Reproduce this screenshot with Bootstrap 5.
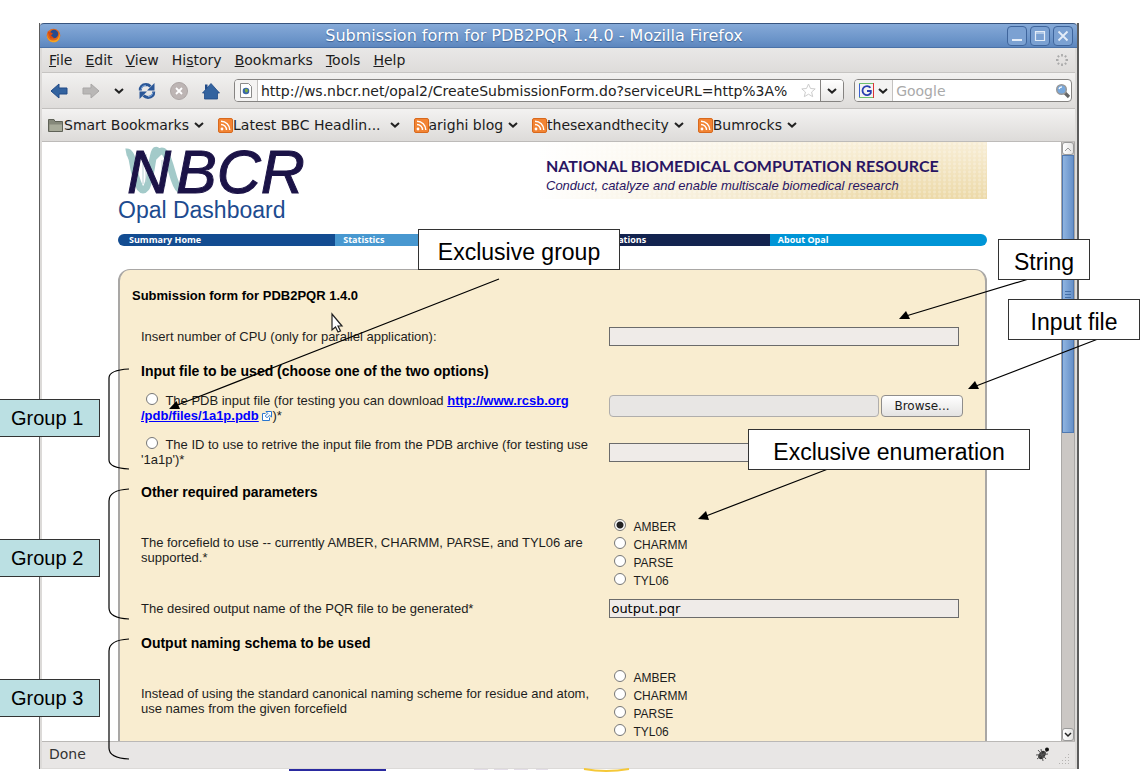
<!DOCTYPE html>
<html lang="en">
<head>
<meta charset="utf-8">
<meta name="viewport" content="width=device-width, initial-scale=1">
<title>Submission form for PDB2PQR 1.4.0</title>
<link href="https://cdn.jsdelivr.net/npm/bootstrap@5.3.0/dist/css/bootstrap.min.css" rel="stylesheet">
<style>
  body { background: #fff; color: #000; font-family: "DejaVu Sans", sans-serif; font-size: 14px; line-height: 20px; }
  svg { display: block; flex: none; }
  .slide { height: 100vh; padding: 23px 69px 4px 39px; overflow: hidden; }
  .win { border: solid #5c5c5c; border-width: 0 2px 0 1px; background: #e6e5e4; }
  .win-body { border: solid #dcdad8; border-width: 0 2px 1px 2px; min-height: 0; }
  .title-bar, .menu-bar, .tool-bar, .mark-bar, .status { flex: none; }

  .title-bar { height: 25px; background: linear-gradient(#86aad8, #6a93c8 70%, #5d86be); border-top: 1px solid #38557f; border-bottom: 1px solid #4a72a8; border-radius: 4px 4px 0 0; color: #fff; font-size: 16px; text-shadow: 0 1px 1px #3c5f92; padding: 0 4px 0 6px; }
  .title-btns { gap: 3px; }
  .title-btn { width: 20px; height: 20px; padding: 0; border: 1px solid #3f659c; border-radius: 4px; background: #7ba1d2; }

  .menu-bar { height: 25px; background: linear-gradient(#e9e8e7, #dedcda); border-bottom: 1px solid #c6c4c2; padding: 0 6px 0 7px; gap: 13px; }
  .menu-bar a, .mark-bar a { color: #1c1c1c; text-decoration: none; white-space: nowrap; }
  .tool-bar { height: 36px; background: linear-gradient(#f2f1f0, #dedcda); border-bottom: 1px solid #c2c0be; padding: 0 3px 0 8px; gap: 14px; }
  .mark-bar { height: 33px; background: linear-gradient(#f3f2f1, #dddbd9); border-bottom: 1px solid #bdbbb9; padding: 0 6px; gap: 13px; }
  .icon-btn { border: 0; padding: 0; background: none; }
  .wells { gap: 10px; min-width: 0; }
  .well-box { height: 23px; border: 1px solid #858381; border-radius: 4px; background: #fff; overflow: hidden; }
  .search-well { width: 26%; }
  .well-box input { border: 0; background: none; outline: 0; padding: 0 0 0 3px; min-width: 0; height: 21px; color: #222; }
  .well-box input::placeholder { color: #a9a9a9; opacity: 1; }
  .site-btn { border: 0; border-right: 1px solid #c4c2c0; background: #f4f3f2; padding: 0 4px; height: 21px; }
  .drop-btn { border: 0; border-left: 1px solid #858381; background: linear-gradient(#fff, #e8e7e6); padding: 0 6px; height: 21px; }

  .view { background: #fff; overflow: hidden; min-height: 0; }
  .doc { min-width: 0; min-height: 0; overflow: hidden; padding: 0 74px 0 76px; font-family: "Liberation Sans", Arial, sans-serif; font-size: 13px; line-height: 15px; color: #1d1d1d; }
  .masthead { height: 92px; }
  .brand-name { color: #1d4b8f; font-size: 23px; line-height: 28px; margin-top: 2px; }
  .ribbon { width: 500px; height: 57px; padding: 15px 0 0 59px; color: #291563;
    background: linear-gradient(90deg, #fff 10%, rgba(255,255,255,.6) 40%, rgba(255,255,255,0) 80%), radial-gradient(circle, rgba(255,255,255,.25) 1px, transparent 2px) 0 0 / 5px 4px, linear-gradient(#f8eed6, #ecd9a8); }
  .ribbon strong { font: 700 16px/18px Lato, sans-serif; }
  .ribbon em { font-size: 13px; line-height: 21px; }
  .site-nav { height: 12px; border-radius: 6px; overflow: hidden; font: 700 9px/12px "Open Sans", sans-serif; display: grid; grid-template-columns: repeat(4, 1fr); }
  .site-nav a { color: #fff; text-decoration: none; padding-left: 8px; height: 12px; }
  .site-nav a:nth-child(1) { padding-left: 11px; background: #134c91; }
  .site-nav a:nth-child(2) { background: #4898d0; }
  .site-nav a:nth-child(3) { background: #13234f; }
  .site-nav a:nth-child(4) { background: #0095d6; }

  .panel { margin-top: 23px; background: #f9edd0; border: 1px solid #a9a7a5; border-right-width: 2px; border-left-width: 2px; border-radius: 12px 12px 0 0; padding: 18px 26px 30px 21px; }
  .panel h1 { font-size: 13px; line-height: 15px; font-weight: 700; color: #000; margin: 0 0 24px -9px; }
  .panel h2 { font-size: 14px; line-height: 16px; font-weight: 700; color: #000; margin: 17px 0 0; }
  .form-line { display: grid; grid-template-columns: 469fr 350fr; align-items: center; margin-top: 14px; }
  .panel h1 + .form-line { margin-top: 0; }
  .choice-line { margin-top: 16px; }
  .choice-line + .form-line { margin-top: 11px; }
  .form-line > :first-child { padding-right: 12px; }
  .choice-line > :first-child { padding-bottom: 5px; }
  .form-line a { color: #00f; font-weight: 700; }
  .text-well { width: 100%; height: 19px; border: 1px solid #6b6b6b; background: #efebe8; border-radius: 0; padding: 0 1px; font-family: "DejaVu Sans", sans-serif; font-size: 13px; line-height: 17px; color: #000; }
  .file-pair { gap: 2px; margin-right: -4px; padding-top: 2px; }
  .file-well { height: 22px; border: 1px solid #b0aeac; border-radius: 4px; background: #e8e6e4; min-width: 0; }
  .browse-btn { width: 82px; height: 22px; border: 1px solid #8f8d8b; border-radius: 4px; background: linear-gradient(#fff, #e4e3e2); font-family: "DejaVu Sans", sans-serif; font-size: 12px; line-height: 18px; padding: 0; color: #1c1c1c; }
  input[type=radio] { appearance: none; width: 12px; height: 12px; border: 1px solid #777; border-radius: 50%; background: #fff; margin: 0; flex: none; }
  input[type=radio]:checked { background: radial-gradient(circle, #222 3px, #fff 4px); }
  input.inline-radio { margin: 0 4px 0 5px; }
  .choice { height: 18px; padding-left: 5px; gap: 7px; font-size: 12px; line-height: 18px; }
  .choice label { padding-top: 3px; }
  .ext-icon { display: inline-block; vertical-align: -1px; }

  .scroll-strip { width: 14px; background: #cbc7c4; border: solid #aaa8a6; border-width: 0 1px; }
  .scroll-strip button { width: 12px; height: 13px; padding: 0; border: 1px solid #999; background: linear-gradient(90deg, #fff, #e4e3e2); border-radius: 3px; display: grid; place-items: center; }
  .scroll-thumb { height: 278px; background: linear-gradient(90deg, #8fb4e0, #6690c8); border: 1px solid #4f79b2; }
  .status { height: 27px; background: #e8e6e5; border-top: 1px solid #bab8b6; padding: 0 4px 2px 7px; color: #333; }

  .note { position: absolute; z-index: 3; background: #fff; border: 1px solid #333; font: 23px/28px "Liberation Sans", Arial, sans-serif; display: grid; place-items: center; height: 41px; padding-top: 4px; white-space: nowrap; }
  .group-tag { position: absolute; z-index: 3; left: 0; width: 100px; height: 38px; background: #bbe0e3; border: 1px solid #333; border-left: 0; font: 20px/36px "Liberation Sans", Arial, sans-serif; padding: 0 0 0 11px; }
  .note-group { left: 418px; top: 229px; width: 202px; }
  .note-string { left: 998px; top: 239px; width: 92px; }
  .note-file { left: 1008px; top: 299px; width: 132px; }
  .note-enum { left: 748px; top: 429px; width: 282px; }
  .tag-1 { top: 399px; } .tag-2 { top: 539px; } .tag-3 { top: 679px; }
  .arrows { position: absolute; left: 0; top: 0; z-index: 2; pointer-events: none; }
</style>
</head>
<body>
<svg width="0" height="0" class="position-absolute" aria-hidden="true">
  <symbol id="feed" viewBox="0 0 15 15"><rect x=".5" y=".5" width="14" height="14" rx="1.500" fill="#f28434" stroke="#d8691d"/><circle cx="4" cy="11" r="1.400" fill="#fff"/><path d="M3 6.500A5.500 5.500 0 0 1 8.500 12M3 3.200A8.800 8.800 0 0 1 11.800 12" fill="none" stroke="#fff" stroke-width="1.400"/></symbol>
  <symbol id="down" viewBox="0 0 10 8"><path d="M1 2L5 5.600L9 2" fill="none" stroke="#222" stroke-width="2"/></symbol>
</svg>

<main class="slide position-relative">
  <div class="win d-flex flex-column h-100">
    <header class="title-bar d-flex align-items-center">
      <svg width="15" height="15" viewBox="0 0 15 15"><circle cx="7.500" cy="7.500" r="6.800" fill="#e0661b"/><circle cx="8" cy="6" r="4.200" fill="#274a8c"/><path d="M1 5C1 10 4 13 8 12.500C12 12 13.500 9 13 5C14.500 8 14 12 10 14C5 15.500 0 12 1 5Z" fill="#f5a623"/><path d="M1.500 3.500L4 4L7 5.500L5 7.500L8 10L4.500 10.500Z" fill="#d9480f"/></svg>
      <span class="flex-fill text-center">Submission form for PDB2PQR 1.4.0 - Mozilla Firefox</span>
      <div class="title-btns d-flex">
        <button class="title-btn" aria-label="Minimize"><svg width="18" height="18"><path d="M4 13h10" stroke="#e4edf8" stroke-width="2"/></svg></button>
        <button class="title-btn" aria-label="Maximize"><svg width="18" height="18"><path d="M4.500 4.500h9v9h-9zM4 6h10" stroke="#e4edf8" stroke-width="1.200" fill="none"/></svg></button>
        <button class="title-btn" aria-label="Close"><svg width="18" height="18"><path d="M4.500 4.500l9 9m0-9l-9 9" stroke="#e4edf8" stroke-width="1.800"/></svg></button>
      </div>
    </header>

    <div class="win-body d-flex flex-column flex-fill">
      <nav class="menu-bar d-flex align-items-center">
        <a href="#"><u>F</u>ile</a><a href="#"><u>E</u>dit</a><a href="#"><u>V</u>iew</a><a href="#">Hi<u>s</u>tory</a><a href="#"><u>B</u>ookmarks</a><a href="#"><u>T</u>ools</a><a href="#"><u>H</u>elp</a>
        <svg class="ms-auto" width="14" height="14" viewBox="-7 -7 14 14" stroke="#aaa" stroke-width="1.800"><path d="M0-6v2.500M0 3.500v2.500M-6 0h2.500M3.500 0h2.500M-4.300-4.300l1.500 1.500M2.800 2.800l1.500 1.500M-4.300 4.300l1.500-1.500M2.800-2.800l1.500-1.500"/></svg>
      </nav>

      <div class="tool-bar d-flex align-items-center">
        <button class="icon-btn" aria-label="Back"><svg width="18" height="16" viewBox="0 0 18 16"><path d="M1 8L9 1V5H17V11H9V15Z" fill="#33639f" stroke="#204a87"/></svg></button>
        <button class="icon-btn" aria-label="Forward"><svg width="18" height="16" viewBox="0 0 18 16"><path d="M17 8L9 1V5H1V11H9V15Z" fill="#b9b7b6" stroke="#a9a7a6"/></svg></button>
        <button class="icon-btn" aria-label="Recent pages"><svg width="10" height="8"><use href="#down"/></svg></button>
        <button class="icon-btn" aria-label="Reload"><svg width="18" height="18" viewBox="0 0 18 18"><path d="M2.300 8.500Q2 2.800 8 2.600Q10.500 2.600 12.500 4.500" fill="none" stroke="#2b5797" stroke-width="3"/><path d="M9 8.500H16.500V1Z" fill="#2b5797"/><path d="M15.700 9.500Q16 15.200 10 15.400Q7.500 15.400 5.500 13.500" fill="none" stroke="#2b5797" stroke-width="3"/><path d="M9 9.500H1.500V17Z" fill="#2b5797"/><path d="M3 7.500Q3.500 3.500 8 3.200M15 10.500Q14.500 14.500 10 14.800" fill="none" stroke="#7fa8dc"/></svg></button>
        <button class="icon-btn" aria-label="Stop"><svg width="18" height="18" viewBox="0 0 18 18"><circle cx="9" cy="9" r="8.500" fill="#bdb5b4" stroke="#aca5a4"/><path d="M6 6l6 6m0-6l-6 6" stroke="#fff" stroke-width="1.800"/></svg></button>
        <button class="icon-btn" aria-label="Home"><svg width="18" height="18" viewBox="0 0 18 18"><path d="M9 1.500L17.500 11H15.500V17H2.500V11H.5Z" fill="#33639f" stroke="#204a87" stroke-width=".8"/><path d="M3 2.500h2.500V6L3 8Z" fill="#204a87"/></svg></button>
        <div class="wells d-flex flex-fill">
          <div class="well-box d-flex align-items-center flex-fill">
            <button class="site-btn" aria-label="Site identity"><svg width="14" height="15" viewBox="0 0 14 15"><path d="M1.500.5H9.500L12.500 3.500V14.500H1.500Z" fill="#fff" stroke="#8a8a8a"/><circle cx="7" cy="8" r="3.300" fill="#3a67a8"/><path d="M6 6Q9 5 9 8Q7 11 6 8Z" fill="#7fb03a"/></svg></button>
            <input class="flex-fill" aria-label="Address" value="http://ws.nbcr.net/opal2/CreateSubmissionForm.do?serviceURL=http%3A%">
            <svg class="me-1" width="15" height="15" viewBox="0 0 15 15"><path d="M7.500 1l2 4.500 4.700.4-3.600 3.100 1.100 4.700-4.200-2.500-4.200 2.500 1.100-4.700L.8 5.900l4.700-.4Z" fill="#fff" stroke="#ccc"/></svg>
            <button class="drop-btn" aria-label="History"><svg width="10" height="8"><use href="#down"/></svg></button>
          </div>
          <div class="well-box search-well d-flex align-items-center">
            <button class="site-btn d-flex align-items-center gap-1" aria-label="Search engine"><svg width="15" height="15" viewBox="0 0 15 15"><path d="M.5 14V1" stroke="#3b62d0"/><path d="M0 .5H14M0 14.500H14" stroke="#6cc06c"/><path d="M14.500 0V15" stroke="#d33"/><path d="M11.500 4.800A4.500 4.500 0 1 0 11.800 10V8H8" fill="none" stroke="#2a3fb0" stroke-width="1.800"/></svg><svg width="10" height="8"><use href="#down"/></svg></button>
            <input class="flex-fill" aria-label="Search" placeholder="Google">
            <svg width="16" height="16" viewBox="0 0 16 16"><path d="M9.500 9.500L14 14" stroke="#666" stroke-width="3.200"/><circle cx="6.500" cy="6.500" r="4.800" fill="#78a8dc" stroke="#999" stroke-width="1.500"/><path d="M4 6Q4.500 4 7 3.800" stroke="#fff" fill="none" stroke-width="1.200"/></svg>
          </div>
        </div>
      </div>

      <nav class="mark-bar d-flex align-items-center">
        <a href="#" class="d-flex align-items-center"><svg width="16" height="14" viewBox="0 0 16 14"><path d="M.5 13.500V1.500H6L7 3.500H14.500V13.500Z" fill="#85887a" stroke="#5f6257"/><path d="M1.500 6.500H14V13H1.500Z" fill="#a8ab9a"/></svg>Smart Bookmarks<svg class="ms-1" width="12" height="8"><use href="#down"/></svg></a>
        <a href="#" class="d-flex align-items-center"><svg width="15" height="15"><use href="#feed"/></svg>Latest BBC Headlin...<svg class="ms-2" width="12" height="8"><use href="#down"/></svg></a>
        <a href="#" class="d-flex align-items-center"><svg width="15" height="15"><use href="#feed"/></svg>arighi blog<svg class="ms-1" width="12" height="8"><use href="#down"/></svg></a>
        <a href="#" class="d-flex align-items-center"><svg width="15" height="15"><use href="#feed"/></svg>thesexandthecity<svg class="ms-1" width="12" height="8"><use href="#down"/></svg></a>
        <a href="#" class="d-flex align-items-center"><svg width="15" height="15"><use href="#feed"/></svg>Bumrocks<svg class="ms-1" width="12" height="8"><use href="#down"/></svg></a>
      </nav>

      <div class="view d-flex flex-fill">
        <div class="doc flex-fill">
          <div class="masthead d-flex justify-content-between align-items-start">
            <div>
              <svg width="200" height="52" viewBox="0 0 200 52" role="img" aria-label="NBCR">
                <path d="M8 10Q13 9 15 22T22 46Q25 50 28 46T34 22T40 11Q44 7 47 11T54 30T62 48" fill="none" stroke="#a3cac9" stroke-width="7"/>
                <path d="M25 14V42M28 12V40M44 18V46M47 18V44" stroke="#b9cfd2"/>
                <text y="51" font-family="Liberation Sans, Arial, sans-serif" font-size="61" font-style="italic" fill="#1b1347" stroke="#1b1347"><tspan x="9">N</tspan><tspan x="58">BCR</tspan></text>
              </svg>
              <div class="brand-name">Opal Dashboard</div>
            </div>
            <div class="ribbon d-flex flex-column"><strong>NATIONAL BIOMEDICAL COMPUTATION RESOURCE</strong><em>Conduct, catalyze and enable multiscale biomedical research</em></div>
          </div>
          <nav class="site-nav">
            <a href="#">Summary Home</a><a href="#">Statistics</a><a href="#">List of Applications</a><a href="#">About Opal</a>
          </nav>

          <form class="panel" onsubmit="return false">
            <h1>Submission form for PDB2PQR 1.4.0</h1>
            <div class="form-line"><label for="cpu">Insert number of CPU (only for parallel application):</label><input id="cpu" class="text-well" type="text"></div>
            <h2>Input file to be used (choose one of the two options)</h2>
            <div class="form-line">
              <label for="src1"><input class="inline-radio" type="radio" name="src" id="src1"> The PDB input file (for testing you can download <a href="#">http://www.rcsb.org<br>/pdb/files/1a1p.pdb</a> <svg class="ext-icon" width="10" height="10" viewBox="0 0 10 10"><path d="M3.500 2.500H.5V9.500H7.500V6.500" fill="#fff" stroke="#2a76cf"/><path d="M4 .5H9.500V6L7.500 4.200L5 6.800L3.300 5L5.800 2.500Z" fill="#fff" stroke="#2a76cf"/></svg>)*</label>
              <div class="file-pair d-flex align-self-start"><input class="file-well flex-fill" type="text" aria-label="Input file"><button class="browse-btn" type="button">Browse...</button></div>
            </div>
            <div class="form-line">
              <label for="src2"><input class="inline-radio" type="radio" name="src" id="src2"> The ID to use to retrive the input file from the PDB archive (for testing use '1a1p')*</label>
              <input class="text-well" type="text" aria-label="PDB ID">
            </div>
            <h2>Other required parameters</h2>
            <div class="form-line choice-line">
              <span>The forcefield to use -- currently AMBER, CHARMM, PARSE, and TYL06 are supported.*</span>
              <div>
                <div class="choice d-flex align-items-center"><input type="radio" name="ff" id="f1" checked><label for="f1">AMBER</label></div>
                <div class="choice d-flex align-items-center"><input type="radio" name="ff" id="f2"><label for="f2">CHARMM</label></div>
                <div class="choice d-flex align-items-center"><input type="radio" name="ff" id="f3"><label for="f3">PARSE</label></div>
                <div class="choice d-flex align-items-center"><input type="radio" name="ff" id="f4"><label for="f4">TYL06</label></div>
              </div>
            </div>
            <div class="form-line"><label for="out">The desired output name of the PQR file to be generated*</label><input id="out" class="text-well" type="text" value="output.pqr"></div>
            <h2>Output naming schema to be used</h2>
            <div class="form-line choice-line">
              <span>Instead of using the standard canonical naming scheme for residue and atom, use names from the given forcefield</span>
              <div>
                <div class="choice d-flex align-items-center"><input type="radio" name="ns" id="n1"><label for="n1">AMBER</label></div>
                <div class="choice d-flex align-items-center"><input type="radio" name="ns" id="n2"><label for="n2">CHARMM</label></div>
                <div class="choice d-flex align-items-center"><input type="radio" name="ns" id="n3"><label for="n3">PARSE</label></div>
                <div class="choice d-flex align-items-center"><input type="radio" name="ns" id="n4"><label for="n4">TYL06</label></div>
              </div>
            </div>
          </form>
        </div>
        <div class="scroll-strip d-flex flex-column">
          <button aria-label="Scroll up"><svg width="8" height="6"><path d="M1 5L4 2L7 5" fill="none" stroke="#999"/></svg></button>
          <div class="scroll-thumb d-grid align-items-center justify-content-center"><svg width="6" height="8"><path d="M0 1.500H6M0 4.500H6M0 7.500H6" stroke="#456fa6"/></svg></div>
          <button class="mt-auto" aria-label="Scroll down"><svg width="8" height="6"><path d="M1 1L4 4L7 1" fill="none" stroke="#222" stroke-width="1.500"/></svg></button>
        </div>
      </div>

      <footer class="status d-flex align-items-center">
        <span>Done</span>
        <svg class="ms-auto me-2" width="16" height="16" viewBox="0 0 16 16"><ellipse cx="7" cy="9" rx="3" ry="4.500" transform="rotate(40 7 9)" fill="#333"/><circle cx="12" cy="3.500" r="2" fill="#111"/><path d="M1 9L13 8M3 4L11 13M6 3L8 15M2 13L12 5" stroke="#555"/></svg>
        <svg width="12" height="12" fill="#b5b3b1" class="align-self-end"><path d="M9 0h1v1h-1zM6 3h1v1h-1zM9 3h1v1h-1zM3 6h1v1h-1zM6 6h1v1h-1zM9 6h1v1h-1zM0 9h1v1h-1zM3 9h1v1h-1zM6 9h1v1h-1zM9 9h1v1h-1z"/></svg>
      </footer>
    </div>
  </div>

  <!-- callout arrows and group brackets laid over the window -->
  <svg class="arrows" width="1148" height="773" viewBox="0 0 1148 773">
    <path d="M289 770H386" stroke="#2a2aa0" stroke-width="2"/><path d="M584 769Q606 773 629 769" stroke="#f5c838" stroke-width="2" fill="none"/><path d="M474 769.500h14m6 0h14m6 0h14m8 0h12" stroke="#e3dde8"/>
    <path d="M332 314V330L335.500 327L338 332L340.500 331L338 326H342Z" fill="#fff" stroke="#222" stroke-width="1.200"/>
    <g fill="none" stroke="#000" stroke-width="1.200">
      <path d="M499 279L175 406M1032 278L906 316M1098 339L976 386M828 469L706 516"/>
      <path d="M129 369Q109 370 109 378V460Q109 468 129 469M129 489Q109 490 109 501V608Q109 618 129 619M129 639Q109 640 109 651V748Q109 758 129 759"/>
    </g>
    <path d="M169 409L176.500 401L180 409ZM899 319L906 311L910 319ZM968 389L975 381L979 389ZM698 519L706 511L709 520Z"/>
  </svg>
  <div class="note note-group">Exclusive group</div>
  <div class="note note-string">String</div>
  <div class="note note-file">Input file</div>
  <div class="note note-enum">Exclusive enumeration</div>
  <div class="group-tag tag-1">Group 1</div>
  <div class="group-tag tag-2">Group 2</div>
  <div class="group-tag tag-3">Group 3</div>
</main>
<script src="https://cdn.jsdelivr.net/npm/bootstrap@5.3.0/dist/js/bootstrap.bundle.min.js"></script>
</body>
</html>
